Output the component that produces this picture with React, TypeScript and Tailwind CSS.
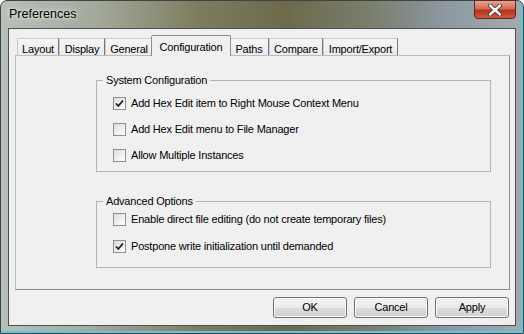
import { ReactNode } from 'react';

const tabs = [
  { label: 'Layout', w: 'w-[42px]' },
  { label: 'Display', w: 'w-[46px]' },
  { label: 'General', w: 'w-[48px]' },
  { label: 'Configuration', w: 'w-[80px]', active: true },
  { label: 'Paths', w: 'w-[40px]' },
  { label: 'Compare', w: 'w-[54px]' },
  { label: 'Import/Export', w: 'w-[75px]' },
];

function CheckBox({ checked }: { checked?: boolean }) {
  return (
    <span className="w-[13px] h-[13px] shrink-0 border border-[#8e8f8f] bg-gradient-to-br from-[#dcdcdc] to-white flex items-center justify-center">
      {checked && (
        <svg width="11" height="11" viewBox="0 0 11 11">
          <path d="M2 5.5 L4.3 8 L9 2.5" fill="none" stroke="#1c1c1c" strokeWidth="1.8" />
        </svg>
      )}
    </span>
  );
}

function Option({ label, checked, h = 'h-[26px]' }: { label: string; checked?: boolean; h?: string }) {
  return (
    <label className={`flex items-center gap-[5px] ${h} pl-[16px]`}>
      <CheckBox checked={checked} />
      <span>{label}</span>
    </label>
  );
}

function Group({ title, children, className }: { title: string; children: ReactNode; className?: string }) {
  return (
    <fieldset className={`ml-[80px] w-[395px] border border-[#b4b4b4] ${className ?? ''}`}>
      <legend className="ml-[6px] px-[3px] leading-[13px]">{title}</legend>
      {children}
    </fieldset>
  );
}

export default function App() {
  return (
    <div
      className="w-[524px] h-[334px] flex flex-col bg-white text-[11px] tracking-[-0.2px] text-black"
      style={{ fontFamily: '"Liberation Sans", Arial, sans-serif' }}
    >
      <div className="flex-1 flex flex-col rounded-t-[7px] border border-[#3e4446] bg-[linear-gradient(90deg,#b9c0bb_0%,#a4a99c_18%,#7d7c5e_38%,#6d6a4c_55%,#7b8070_72%,#8d98a0_85%,#a3abae_100%)] shadow-[inset_-2px_-2px_0_#56c9e4]">
        {/* title bar */}
        <div className="h-[27px] flex items-start justify-between">
          <span className="pl-[8px] pt-[4px] text-[12.5px] tracking-normal text-black [text-shadow:0_0_6px_#e8eadf,0_0_3px_#e8eadf]">
            Preferences
          </span>
          <div className="mr-[7px] -mt-px w-[42px] h-[19px] rounded-b-[4px] border border-[#5a2a22] bg-[linear-gradient(180deg,#e6a493_0%,#d36b55_45%,#b8321c_55%,#cc5a3c_100%)] flex items-center justify-center">
            <svg width="14" height="12" viewBox="0 0 14 12">
              <path d="M2 1.5 L12 10.5 M12 1.5 L2 10.5" stroke="#3d2420" strokeWidth="4" strokeLinecap="round" />
              <path d="M2 1.5 L12 10.5 M12 1.5 L2 10.5" stroke="#ffffff" strokeWidth="2.4" strokeLinecap="round" />
            </svg>
          </div>
        </div>

        {/* client area */}
        <div className="flex-1 mx-[7px] mb-[7px] border border-[#4b5052] bg-[#f0f0f0] flex flex-col pt-[5px] pl-[6px] pr-[5px]">
          <div className="flex items-end h-[21px] pl-[2px] relative z-10">
            {tabs.map((t) =>
              t.active ? (
                <div
                  key={t.label}
                  className={`${t.w} -mx-[2px] h-[21px] border border-b-0 border-[#898c95] bg-[#f0f0f0] rounded-t-[2px] flex items-start justify-center pt-[3px] relative z-10 -mb-px`}
                >
                  {t.label}
                </div>
              ) : (
                <div
                  key={t.label}
                  className={`${t.w} h-[17px] border border-b-0 border-l-[#c7c9cf] border-t-[#c7c9cf] border-r-[#777a82] bg-gradient-to-b from-[#f6f6f6] to-[#ebebeb] flex items-start justify-center pt-[2px]`}
                >
                  {t.label}
                </div>
              )
            )}
          </div>

          <div className="h-[235px] border border-[#898c95] border-l-[#b9bcc3] border-t-[#b9bcc3] bg-[#f0f0f0] pt-[18px]">
            <Group title="System Configuration" className="h-[98px] pt-[3px]">
              <Option label="Add Hex Edit item to Right Mouse Context Menu" checked />
              <Option label="Add Hex Edit menu to File Manager" />
              <Option label="Allow Multiple Instances" />
            </Group>
            <Group title="Advanced Options" className="mt-[23px] h-[73px] flex flex-col gap-[5px]">
              <Option label="Enable direct file editing (do not create temporary files)" h="h-[22px]" />
              <Option label="Postpone write initialization until demanded" checked h="h-[22px]" />
            </Group>
          </div>

          <div className="flex justify-end gap-[7px] mt-[7px] pr-px">
            {['OK', 'Cancel', 'Apply'].map((b) => (
              <button
                key={b}
                className="w-[74px] h-[21px] rounded-[3px] border border-[#707070] bg-[linear-gradient(180deg,#f2f2f2_0%,#ebebeb_50%,#dddddd_51%,#cfcfcf_100%)] shadow-[inset_0_0_0_1px_#fcfcfc]"
              >
                {b}
              </button>
            ))}
          </div>
        </div>
      </div>
    </div>
  );
}
